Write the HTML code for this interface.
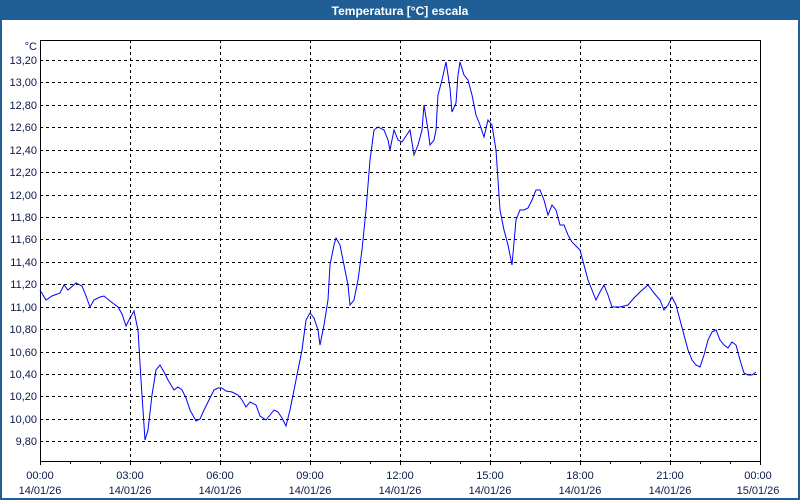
<!DOCTYPE html>
<html><head><meta charset="utf-8"><style>
html,body{margin:0;padding:0;background:#fff}
svg{display:block}
text{font-family:"Liberation Sans",sans-serif;font-size:11px;fill:#0c1a48}
</style></head><body>
<svg width="800" height="500" viewBox="0 0 800 500" xmlns="http://www.w3.org/2000/svg">
<rect x="0" y="0" width="800" height="500" fill="#fff"/>
<rect x="0" y="0" width="800" height="20" fill="#1f5f96"/>
<rect x="0" y="20" width="2" height="480" fill="#1f5f96"/>
<rect x="798" y="20" width="2" height="480" fill="#1f5f96"/>
<rect x="0" y="498" width="800" height="2" fill="#1f5f96"/>
<text x="400" y="15" text-anchor="middle" style="fill:#fff;font-weight:bold;font-size:12px">Temperatura [°C] escala</text>
<g stroke="#000" stroke-width="1" stroke-dasharray="3,3" shape-rendering="crispEdges">
<line x1="40" x2="760" y1="60.5" y2="60.5"/><line x1="40" x2="760" y1="82.5" y2="82.5"/><line x1="40" x2="760" y1="105.5" y2="105.5"/><line x1="40" x2="760" y1="127.5" y2="127.5"/><line x1="40" x2="760" y1="150.5" y2="150.5"/><line x1="40" x2="760" y1="172.5" y2="172.5"/><line x1="40" x2="760" y1="195.5" y2="195.5"/><line x1="40" x2="760" y1="217.5" y2="217.5"/><line x1="40" x2="760" y1="239.5" y2="239.5"/><line x1="40" x2="760" y1="262.5" y2="262.5"/><line x1="40" x2="760" y1="284.5" y2="284.5"/><line x1="40" x2="760" y1="307.5" y2="307.5"/><line x1="40" x2="760" y1="329.5" y2="329.5"/><line x1="40" x2="760" y1="352.5" y2="352.5"/><line x1="40" x2="760" y1="374.5" y2="374.5"/><line x1="40" x2="760" y1="396.5" y2="396.5"/><line x1="40" x2="760" y1="419.5" y2="419.5"/><line x1="40" x2="760" y1="441.5" y2="441.5"/>
<line y1="40" y2="461" x1="130.5" x2="130.5"/><line y1="40" y2="461" x1="220.5" x2="220.5"/><line y1="40" y2="461" x1="310.5" x2="310.5"/><line y1="40" y2="461" x1="400.5" x2="400.5"/><line y1="40" y2="461" x1="490.5" x2="490.5"/><line y1="40" y2="461" x1="580.5" x2="580.5"/><line y1="40" y2="461" x1="670.5" x2="670.5"/>
</g>
<rect x="40.5" y="40.5" width="720" height="421" fill="none" stroke="#000" shape-rendering="crispEdges"/>
<g stroke="#000" shape-rendering="crispEdges">
<path d="M40.5 461v4M70.5 461v3M100.5 461v3M130.5 461v4M160.5 461v3M190.5 461v3M220.5 461v4M250.5 461v3M280.5 461v3M310.5 461v4M340.5 461v3M370.5 461v3M400.5 461v4M430.5 461v3M460.5 461v3M490.5 461v4M520.5 461v3M550.5 461v3M580.5 461v4M610.5 461v3M640.5 461v3M670.5 461v4M700.5 461v3M730.5 461v3M760.5 461v4"/>
</g>
<g text-anchor="end">
<text x="37" y="50">°C</text>
<text x="37" y="64">13,20</text><text x="37" y="86">13,00</text><text x="37" y="109">12,80</text><text x="37" y="131">12,60</text><text x="37" y="154">12,40</text><text x="37" y="176">12,20</text><text x="37" y="199">12,00</text><text x="37" y="221">11,80</text><text x="37" y="243">11,60</text><text x="37" y="266">11,40</text><text x="37" y="288">11,20</text><text x="37" y="311">11,00</text><text x="37" y="333">10,80</text><text x="37" y="356">10,60</text><text x="37" y="378">10,40</text><text x="37" y="400">10,20</text><text x="37" y="423">10,00</text><text x="37" y="445">9,80</text>
</g>
<g text-anchor="middle">
<text x="40" y="479">00:00</text><text x="40" y="494">14/01/26</text>
<text x="130" y="479">03:00</text><text x="130" y="494">14/01/26</text>
<text x="220" y="479">06:00</text><text x="220" y="494">14/01/26</text>
<text x="310" y="479">09:00</text><text x="310" y="494">14/01/26</text>
<text x="400" y="479">12:00</text><text x="400" y="494">14/01/26</text>
<text x="490" y="479">15:00</text><text x="490" y="494">14/01/26</text>
<text x="580" y="479">18:00</text><text x="580" y="494">14/01/26</text>
<text x="670" y="479">21:00</text><text x="670" y="494">14/01/26</text>
<text x="758" y="479">00:00</text><text x="758" y="494">15/01/26</text>
</g>
<polyline fill="none" stroke="#0000ff" stroke-width="1" points="40,290 46,300 52,296 60,293 64,285 68,290 76,283 82,286 86,296 90,307 94,300 100,297 104,296 110,301 118,307 122,314 126,326 130,318 134,311 138,330 141,380 145,440 148,430 152,395 156,370 160,365 164,372 168,380 174,390 178,387 182,390 186,398 190,410 196,421 200,419 204,410 210,398 214,390 218,388 222,388 226,391 232,392 238,395 242,400 246,407 250,402 256,405 260,416 266,420 270,415 274,410 278,412 282,418 286,426 290,410 294,390 298,370 302,350 306,320 310,313 314,318 318,330 320,345 324,325 328,300 330,265 334,245 336,238 340,245 344,265 348,285 350,305 354,300 358,280 362,250 366,210 370,160 374,130 378,127 384,130 388,140 390,150 394,130 398,140 402,142 406,136 410,130 414,155 418,145 422,130 424,105 428,130 430,145 434,140 436,130 438,95 442,80 446,62 450,88 452,112 456,103 458,75 460,62 464,75 468,80 472,95 476,115 480,125 484,137 488,120 492,125 496,150 500,210 504,230 508,245 512,265 516,220 520,210 524,210 528,208 532,200 536,190 540,190 544,200 548,215 552,205 556,210 560,225 564,225 568,235 572,242 576,246 580,250 584,265 588,280 592,290 596,300 600,292 604,285 608,295 612,307 616,307 620,307 628,305 634,298 640,292 648,285 654,293 660,300 664,310 668,305 672,297 676,305 680,320 684,335 688,350 692,360 696,365 700,367 704,355 708,340 712,332 716,330 720,340 724,345 728,348 732,342 736,345 740,360 744,373 748,375 752,375 756,372"/>
</svg>
</body></html>
